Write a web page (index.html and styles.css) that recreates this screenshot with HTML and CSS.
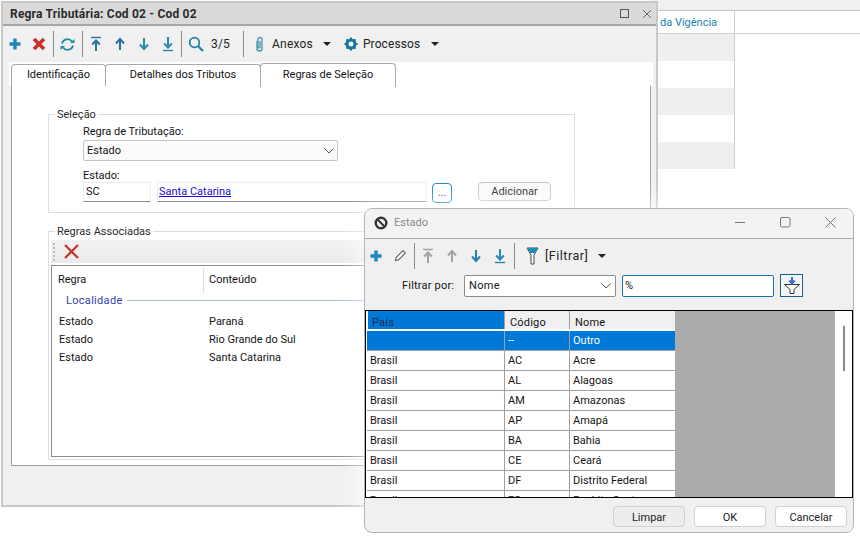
FILE: index.html
```html
<!DOCTYPE html>
<html lang="pt">
<head>
<meta charset="utf-8">
<title>Regra Tributária</title>
<link rel="stylesheet" href="styles.css">
</head>
<body>
<svg class="defs" width="0" height="0">
  <defs>
    <symbol id="plus" viewBox="0 0 14 14"><path d="M7 1.500v11M1.500 7h11" stroke="#1f86b8" stroke-width="3.4" fill="none"/></symbol>
    <symbol id="first" viewBox="0 0 14 16"><path d="M2 1.500h10" stroke="currentColor" stroke-width="1.4"/><path d="M7 15V5M3.200 8.500 7 4.500l3.800 4" stroke="currentColor" stroke-width="2" fill="none"/></symbol>
    <symbol id="up" viewBox="0 0 14 16"><path d="M7 14V3.500M3 7.500 7 3l4 4.500" stroke="currentColor" stroke-width="2" fill="none"/></symbol>
    <symbol id="down" viewBox="0 0 14 16"><path d="M7 2v10.500M3 8.500 7 13l4-4.500" stroke="currentColor" stroke-width="2" fill="none"/></symbol>
    <symbol id="last" viewBox="0 0 14 16"><path d="M7 1v10M3.200 7.500 7 11.500l3.800-4" stroke="currentColor" stroke-width="2" fill="none"/><path d="M2 14.500h10" stroke="currentColor" stroke-width="1.4"/></symbol>
  </defs>
</svg>

<main class="desk">
  <section class="bg-grid">
    <div class="bg-top"></div>
    <div class="bg-head"><span>da Vigência</span></div>
    <div class="bg-row alt"></div>
    <div class="bg-row"></div>
    <div class="bg-row alt"></div>
    <div class="bg-row"></div>
    <div class="bg-row alt"></div>
  </section>

  <section class="win main-win">
    <header class="win-title">
      <span class="win-name">Regra Tributária: Cod 02 - Cod 02</span>
      <span class="win-ctl">
        <svg width="10" height="10" viewBox="0 0 10 10"><rect x=".5" y=".5" width="8" height="8" fill="none" stroke="#555"/></svg>
        <svg width="10" height="10" viewBox="0 0 10 10"><path d="M1 1l8 8M9 1l-8 8" stroke="#666" fill="none"/></svg>
      </span>
    </header>
    <div class="toolbar main-bar">
      <svg class="i14" width="14" height="14"><use href="#plus"/></svg>
      <svg class="i14 gap-x" width="14" height="14" viewBox="0 0 14 14"><path d="M2 2l10 10M12 2 2 12" stroke="#c8302c" stroke-width="3.6" fill="none"/></svg>
      <span class="sep sep-a"></span>
      <svg class="i-ref" width="15" height="15" viewBox="0 0 15 15"><path d="M2 6.500A5.600 5.600 0 0 1 12 4.500M13 8.500A5.600 5.600 0 0 1 3 10.500" stroke="#1d8aa8" stroke-width="1.8" fill="none"/><path d="M10 6h4.500V2zM5 9H.5v4z" fill="#1d8aa8"/></svg>
      <span class="sep sep-b"></span>
      <svg class="nav n1" width="14" height="16"><use href="#first"/></svg>
      <svg class="nav n2" width="14" height="16"><use href="#up"/></svg>
      <svg class="nav n3" width="14" height="16"><use href="#down"/></svg>
      <svg class="nav n4" width="14" height="16"><use href="#last"/></svg>
      <span class="sep sep-c"></span>
      <svg class="i-search" width="16" height="16" viewBox="0 0 16 16"><circle cx="6.500" cy="6.500" r="4.800" fill="none" stroke="#1d7f9e" stroke-width="1.7"/><path d="M10 10l5 5" stroke="#1d7f9e" stroke-width="2.1"/></svg>
      <span class="bar-text count">3/5</span>
      <span class="sep sep-d"></span>
      <svg class="i-clip" width="11" height="16" viewBox="0 0 11 16"><path d="M3 5v7.500a2.500 2.500 0 0 0 5 0V3.500a2 2 0 0 0-4 0V11a.8.8 0 0 0 2 0V5" fill="none" stroke="#4d9aa8" stroke-width="1.4"/></svg>
      <span class="bar-text anexos">Anexos</span>
      <span class="caret caret-a"></span>
      <svg class="i-gear" width="14" height="14" viewBox="0 0 14 14"><circle cx="7" cy="7" r="4" fill="none" stroke="#17759c" stroke-width="3"/><path d="M7 .5v2.500M7 11v2.500M.5 7H3M11 7h2.500M2.400 2.400l1.800 1.800M9.800 9.800l1.800 1.800M11.600 2.400 9.800 4.200M4.200 9.800l-1.800 1.800" stroke="#17759c" stroke-width="2"/></svg>
      <span class="bar-text proc">Processos</span>
      <span class="caret caret-b"></span>
    </div>
    <nav class="tabs">
      <span class="tab t1">Identificação</span>
      <span class="tab t2">Detalhes dos Tributos</span>
      <span class="tab t3 on">Regras de Seleção</span>
    </nav>
    <div class="panel">
      <fieldset class="group sel-group">
        <legend>Seleção</legend>
        <div class="sel-body">
          <label class="lbl">Regra de Tributação:</label>
          <div class="combo">
            <span>Estado</span>
            <svg width="10" height="6" viewBox="0 0 10 6"><path d="M.5.5 5 5 9.500.5" fill="none" stroke="#555"/></svg>
          </div>
          <label class="lbl lbl2">Estado:</label>
          <div class="sel-row">
            <span class="field f-code">SC</span>
            <span class="field f-name"><a href="#">Santa Catarina</a></span>
            <button class="btn dots" type="button">...</button>
            <button class="btn add" type="button">Adicionar</button>
          </div>
        </div>
      </fieldset>
      <fieldset class="group rules-group">
        <legend>Regras Associadas</legend>
        <div class="rule-bar">
          <span class="grip"></span>
          <svg width="15" height="15" viewBox="0 0 15 15"><path d="M1 1l13 13M14 1 1 14" stroke="#c9332a" stroke-width="2.2" fill="none"/></svg>
        </div>
        <div class="rule-list">
          <div class="rule-head"><span class="c1">Regra</span><span class="c2">Conteúdo</span></div>
          <div class="rule-sec"><span>Localidade</span><i></i></div>
          <div class="rule-row"><span class="c1">Estado</span><span>Paraná</span></div>
          <div class="rule-row"><span class="c1">Estado</span><span>Rio Grande do Sul</span></div>
          <div class="rule-row"><span class="c1">Estado</span><span>Santa Catarina</span></div>
        </div>
      </fieldset>
    </div>
  </section>

  <section class="win2">
    <header class="w2-title">
      <svg width="14" height="14" viewBox="0 0 14 14"><circle cx="7" cy="7" r="5.300" fill="none" stroke="#333" stroke-width="2.400"/><path d="M3.500 3.500l7 7" stroke="#333" stroke-width="2"/></svg>
      <span class="w2-name">Estado</span>
      <span class="w2-ctl">
        <svg width="11" height="11" viewBox="0 0 11 11"><path d="M0 5.500h10" stroke="#777"/></svg>
        <svg width="11" height="11" viewBox="0 0 11 11"><rect x=".5" y=".5" width="9.500" height="9.500" rx="1.500" fill="none" stroke="#777"/></svg>
        <svg width="11" height="11" viewBox="0 0 11 11"><path d="M.5.5l10 10M10.500.5l-10 10" stroke="#777" fill="none"/></svg>
      </span>
    </header>
    <div class="toolbar w2-bar">
      <svg width="14" height="14"><use href="#plus"/></svg>
      <svg class="pen" width="13" height="13" viewBox="0 0 13 13"><path d="M1.500 11.500l.6-3L9 1.600 11.400 4 4.500 10.900z" fill="#fff" stroke="#666" stroke-width="1.100"/></svg>
      <span class="sep w-sep1"></span>
      <svg class="nav w1" width="14" height="16"><use href="#first"/></svg>
      <svg class="nav w2" width="14" height="16"><use href="#up"/></svg>
      <svg class="nav w3" width="14" height="16"><use href="#down"/></svg>
      <svg class="nav w4" width="14" height="16"><use href="#last"/></svg>
      <span class="sep w-sep2"></span>
      <svg class="i-funnel" width="13" height="18" viewBox="0 0 13 18"><path d="M1 1h11L8 8v9H5V8z" fill="#fff" stroke="#444"/><path d="M1 1h11L8.500 6h-4z" fill="#1d8fb5"/></svg>
      <span class="bar-text filt">[Filtrar]</span>
      <span class="caret caret-c"></span>
    </div>
    <div class="filter-row">
      <span class="f-label">Filtrar por:</span>
      <div class="f-combo"><span>Nome</span><svg width="10" height="6" viewBox="0 0 10 6"><path d="M.5.5 5 5 9.500.5" fill="none" stroke="#555"/></svg></div>
      <div class="f-input">%</div>
      <button class="f-btn" type="button">
        <svg width="18" height="19" viewBox="0 0 18 19"><path d="M1.500 8.500h15L11 13.500v4H7v-4z" fill="#fff" stroke="#333"/><path d="M9 1v6M6.300 4.500 9 7.500l2.700-3" stroke="#3a70d8" stroke-width="2" fill="none"/></svg>
      </button>
    </div>
    <div class="grid-box">
      <div class="grid">
        <div class="gh gh-sel">País</div><div class="gh">Código</div><div class="gh">Nome</div>
        <div class="gc sel"></div><div class="gc sel">--</div><div class="gc sel">Outro</div>
        <div class="gc">Brasil</div><div class="gc">AC</div><div class="gc">Acre</div>
        <div class="gc">Brasil</div><div class="gc">AL</div><div class="gc">Alagoas</div>
        <div class="gc">Brasil</div><div class="gc">AM</div><div class="gc">Amazonas</div>
        <div class="gc">Brasil</div><div class="gc">AP</div><div class="gc">Amapá</div>
        <div class="gc">Brasil</div><div class="gc">BA</div><div class="gc">Bahia</div>
        <div class="gc">Brasil</div><div class="gc">CE</div><div class="gc">Ceará</div>
        <div class="gc">Brasil</div><div class="gc">DF</div><div class="gc">Distrito Federal</div>
        <div class="gc">Brasil</div><div class="gc">ES</div><div class="gc">Espírito Santo</div>
      </div>
      <div class="grid-empty"></div>
      <div class="grid-scroll"><span></span></div>
    </div>
    <footer class="w2-foot">
      <button class="btn2 limpar" type="button">Limpar</button>
      <button class="btn2" type="button">OK</button>
      <button class="btn2" type="button">Cancelar</button>
    </footer>
  </section>
</main>
</body>
</html>
```

FILE: styles.css
```css
* { box-sizing: border-box; }
html, body { margin: 0; padding: 0; background: #fff; }
body { font: 11px/14px Roboto, "Liberation Sans", Arial, sans-serif; color: #141414; overflow: hidden; }
.defs { position: absolute; }
.desk { position: relative; width: 860px; height: 537px; overflow: hidden; background: #fff; }

/* background window */
.bg-grid { position: absolute; left: 650px; top: 0; width: 210px; }
.bg-top { height: 11px; background: #f0f0f0; border-bottom: 1px solid #c4c4c4; }
.bg-head { height: 23px; border-bottom: 1px solid #cfcfcf; position: relative; width: 210px; padding: 5px 0 0 10px; color: #1a7fb5; }
.bg-head::after { content: ""; position: absolute; left: 84px; top: 0; bottom: 0; width: 1px; background: #cfcfcf; }
.bg-row { width: 85px; height: 27px; border-right: 1px solid #cfcfcf; }
.bg-row.alt { background: #efefef; }

/* main window */
.win { position: absolute; left: 1px; top: 1px; width: 657px; height: 506px; background: #f0f0f0; border: 2px solid #c8c8c8; }
.win-title { height: 23px; background: #dadada; border-bottom: 2px solid #a6a6a6; display: flex; align-items: center; justify-content: space-between; padding: 0 4px 0 7px; }
.win-name { font-size: 12px; font-weight: 700; letter-spacing: .2px; color: #2b2b2b; }
.win-ctl { display: flex; gap: 12px; }
.toolbar { display: flex; align-items: center; font-size: 12px; }
.main-bar { height: 36px; padding-left: 5px; }
.sep { width: 1px; height: 26px; background: #8a8a8a; flex: none; }
.nav { color: #2a7ea8; flex: none; }
.gap-x { margin-left: 10px; }
.sep-a { margin-left: 7px; }
.i-ref { margin-left: 6px; }
.sep-b { margin-left: 7px; }
.n1 { margin-left: 6px; }
.n1, .n2 { color: #2a6f9e; }
.n3, .n4 { color: #2a87ad; }
.n2, .n3, .n4 { margin-left: 10px; }
.sep-c { margin-left: 6px; }
.i-search { margin-left: 6px; }
.bar-text { letter-spacing: .2px; color: #222; }
.count { margin-left: 7px; }
.sep-d { margin-left: 13px; }
.i-clip { margin-left: 10px; }
.anexos { margin-left: 7px; }
.caret { width: 0; height: 0; border: 4px solid transparent; border-top: 4px solid #222; border-bottom: 0; flex: none; }
.caret-a { margin-left: 10px; }
.i-gear { margin-left: 13px; margin-right: 5px; }
.proc { letter-spacing: .1px; }
.caret-b { margin-left: 11px; }

.tabs { display: flex; align-items: flex-end; height: 24px; margin: 0 3px 0 6px; padding: 2px 0 0 2px; background: #fff; position: relative; z-index: 1; }
.tab { height: 22px; border: 1px solid #a8a8a8; border-bottom: 0; border-radius: 4px 4px 0 0; margin-right: -1px; padding-top: 3px; text-align: center; background: #fff; }
.t1 { width: 95px; }
.t2 { width: 156px; }
.t3 { width: 136px; height: 24px; position: relative; top: 1px; padding-top: 4px; }
.panel { margin: -1px 5px 0 8px; height: 381px; border: 1px solid #a0a0a0; background: #fff; padding: 21px 75px 0 36px; }
.group { margin: 0; padding: 0; border: 1px solid #dcdcdc; min-width: 0; }
.group legend { margin-left: 6px; padding: 1px 2px 0; line-height: 14px; color: #2a2a2a; }
.sel-group { height: 106px; }
.sel-body { padding: 3px 0 0 34px; }
.lbl { display: block; height: 14px; }
.combo { width: 255px; height: 21px; margin-top: 1px; border: 1px solid #c4c4c4; border-radius: 2px; background: #fbfbfb; display: flex; align-items: center; justify-content: space-between; padding: 1px 3px 0 3px; }
.lbl2 { margin-top: 7px; padding-top: 1px; }
.sel-row { display: flex; align-items: flex-start; }
.field { height: 20px; border: 1px solid #ececec; border-bottom-color: #8f8f8f; padding: 2px 2px; background: #fff; }
.f-code { width: 68px; }
.f-name { width: 270px; margin-left: 6px; padding-left: 1px; }
.f-name a { color: #1a0dd6; }
.btn { font: inherit; background: #fff; color: #222; border: 1px solid #c4c4c4; border-radius: 4px; padding: 0; }
.dots { width: 20px; height: 20px; margin: 1px 0 0 5px; border: 1px solid #1a7fd0; line-height: 12px; color: #3a2a70; }
.add { width: 73px; height: 19px; margin-left: 26px; background: #fbfbfb; }
.rules-group { height: 236px; margin-top: 11px; padding: 1px 2px 0; }
.rules-group legend { margin-left: 4px; }
.rule-bar { height: 23px; background: linear-gradient(#f2f2f2, #ebebeb); display: flex; align-items: center; gap: 9px; padding-left: 2px; }
.grip { width: 2px; height: 18px; background: repeating-linear-gradient(#bbb 0 2px, transparent 2px 4px); }
.rule-list { margin-top: 2px; height: 192px; border: 1px solid #8c8c8c; padding-left: 7px; }
.rule-head { display: flex; height: 25px; padding-top: 7px; margin-left: -1px; }
.rule-head .c1 { width: 145px; }
.rule-head .c2 { padding-left: 5px; border-left: 1px solid #dcdcdc; height: 25px; margin-top: -5px; padding-top: 5px; width: 200px; }
.c1 { flex: none; }
.rule-sec { display: flex; align-items: center; height: 15px; margin-left: 7px; margin-top: 2px; color: #3340b0; letter-spacing: .3px; }
.rule-sec i { flex: 1; height: 1px; background: #a8bce0; margin-left: 4px; }
.rule-row { display: flex; height: 18px; padding-top: 4px; }
.rule-sec + .rule-row { margin-top: 3px; }
.rule-row .c1 { width: 150px; }

/* lookup dialog */
.win2 { position: absolute; left: 364px; top: 208px; width: 490px; height: 325px; background: #f0f0f0; border: 1px solid #b4b4b4; border-radius: 8px; box-shadow: 0 0 32px rgba(255,255,255,.95); overflow: hidden; }
.w2-title { height: 30px; display: flex; align-items: center; padding: 0 0 2px 9px; background: #f3f3f3; border-bottom: 1px solid #a8a8a8; }
.w2-name { margin-left: 6px; color: #8a8a8a; }
.w2-ctl { margin-left: auto; display: flex; gap: 34px; padding-right: 17px; }
.w2-bar { height: 33px; padding-left: 4px; }
.pen { margin-left: 11px; }
.w-sep1 { margin-left: 7px; }
.w1 { margin-left: 6px; color: #a0a0a0; }
.w2 { margin-left: 10px; color: #a0a0a0; }
.w3 { margin-left: 10px; color: #2a7ea8; }
.w4 { margin-left: 10px; color: #2a87ad; }
.w-sep2 { margin-left: 7px; }
.i-funnel { margin-left: 11px; }
.filt { margin-left: 6px; font-size: 12.500px; letter-spacing: .5px; }
.caret-c { margin-left: 10px; }
.filter-row { display: flex; align-items: center; height: 23px; margin-top: 2px; padding-left: 37px; }
.f-label { width: 62px; letter-spacing: .2px; }
.f-combo { width: 152px; height: 22px; background: #fff; border: 1px solid #8c8c8c; border-radius: 2px; display: flex; align-items: center; justify-content: space-between; padding: 0 4px 0 4px; letter-spacing: .3px; }
.f-input { width: 152px; height: 22px; margin-left: 6px; background: #fff; border: 1px solid #1475ae; border-radius: 2px; padding: 3px 2px; }
.f-btn { width: 23px; height: 23px; margin-left: 6px; background: #f6f6f6; border: 1px solid #15608f; padding: 0; display: flex; align-items: center; justify-content: center; }
.grid-box { display: flex; height: 188px; margin: 13px 0 0 0; border: 1px solid #000; width: 488px; background: #fff; overflow: hidden; }
.grid { width: 309px; flex: none; display: grid; grid-template-columns: 138px 65px 106px; grid-auto-rows: 20px; padding-left: 1px; background: #fff; align-content: start; }
.gh { height: 18px; background: #f0f0f0; border-right: 1px solid #a0a0a0; padding: 5px 0 0 5px; letter-spacing: .2px; }
.gh-sel { background: #0078d7; color: #1a2a50; border-left: 1px solid #fff; padding-left: 4px; }
.gc { height: 20px; border-right: 1px solid #a0a0a0; border-bottom: 1px solid #a0a0a0; padding: 3px 0 0 3px; }
.gc.sel { background: #0078d7; color: #fff; }
.grid-empty { width: 160px; flex: none; background: #ababab; }
.grid-scroll { flex: 1; background: #fff; padding: 15px 0 0 8px; }
.grid-scroll span { display: block; width: 2px; height: 45px; background: #8a8a8a; }
.w2-foot { display: flex; justify-content: flex-end; gap: 9px; padding: 8px 6px 0 0; }
.btn2 { width: 72px; height: 21px; font: inherit; background: #fff; border: 1px solid #d0d0d0; border-radius: 4px; padding: 2px 0 0; color: #222; }
.limpar { background: #ededed; }
```
